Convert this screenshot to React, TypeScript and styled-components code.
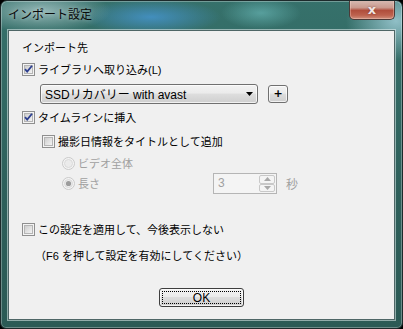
import React from 'react'
import styled, { createGlobalStyle } from 'styled-components'

const GlobalStyle = createGlobalStyle`
  html, body {
    margin: 0;
    padding: 0;
    background: #000;
  }
  body {
    font-family: "Liberation Sans", "Noto Sans CJK JP", sans-serif;
    font-size: 11px;
    color: #000;
  }
`

const Frame = styled.div`
  box-sizing: border-box;
  width: 403px;
  height: 329px;
  display: flex;
  flex-direction: column;
  border: 1px solid #1d2a2b;
  border-radius: 7px 7px 6px 6px;
  box-shadow: inset 0 0 0 1px rgba(255, 255, 255, 0.3);
  overflow: hidden;
  background:
    radial-gradient(ellipse 70px 22px at 40px 10px, rgba(170, 200, 200, 0.8), transparent),
    radial-gradient(ellipse 70px 18px at 150px 16px, rgba(70, 150, 210, 0.8), transparent),
    radial-gradient(ellipse 40px 16px at 260px 12px, rgba(110, 190, 190, 0.6), transparent),
    radial-gradient(ellipse 50px 40px at 395px 20px, rgba(160, 205, 215, 0.85), transparent),
    linear-gradient(#36716b, #2d5f5a 60%, #2b5a55);
`

const TitleBar = styled.div`
  height: 29px;
  display: flex;
  justify-content: space-between;
  align-items: flex-start;
  padding: 0 7px 0 7px;
`

const Title = styled.div`
  margin-top: 5px;
  font-family: "Noto Sans CJK JP", sans-serif;
  font-size: 12px;
  line-height: 16px;
  color: #0a0a0a;
  text-shadow: 0 0 4px rgba(255, 255, 255, 0.45);
`

const CloseButton = styled.div`
  box-sizing: border-box;
  width: 46px;
  height: 20px;
  margin-top: -1px;
  display: flex;
  align-items: center;
  justify-content: center;
  border: 1px solid #4b3a38;
  border-top: none;
  border-radius: 0 0 5px 5px;
  box-shadow: inset 0 0 0 1px rgba(255, 220, 210, 0.35);
  background: linear-gradient(#d8bdb5, #c99a8e 40%, #b04e3c 55%, #bd624e 80%, #cf8f7c);
  color: #f0e6e4;
  font-family: "DejaVu Sans", sans-serif;
  font-weight: bold;
  font-size: 13px;
  line-height: 1;
  text-shadow: 0 0 2px rgba(80, 30, 20, 0.6);
`

const Client = styled.div`
  box-sizing: border-box;
  margin: 0 7px 8px 7px;
  flex: 1;
  background: #f0f0f0;
  border: 1px solid #4e6666;
  box-shadow: 0 0 0 1px rgba(230, 240, 240, 0.55);
  padding: 6px 0 0 13px;
  display: flex;
  flex-direction: column;
`

const Row = styled.div<{ $indent?: number; $h: number; $mt?: number }>`
  display: flex;
  align-items: center;
  height: ${({ $h }) => $h}px;
  margin-top: ${({ $mt }) => $mt || 0}px;
  padding-left: ${({ $indent }) => $indent || 0}px;
  white-space: nowrap;
`

const Label = styled.span<{ $disabled?: boolean; $width?: number }>`
  margin-left: 3px;
  color: ${({ $disabled }) => ($disabled ? '#a0a0a0' : '#000')};
  ${({ $width }) => ($width ? `width: ${$width}px;` : '')}
  line-height: 14px;
`

const Heading = styled.span`
  line-height: 14px;
`

const Combo = styled.div`
  box-sizing: border-box;
  width: 218px;
  height: 20px;
  display: flex;
  align-items: center;
  justify-content: space-between;
  padding: 0 4px 0 4px;
  border: 1px solid #707070;
  border-radius: 3px;
  box-shadow: inset 0 0 0 1px rgba(255, 255, 255, 0.7);
  background: linear-gradient(#f2f2f2, #ebebeb 45%, #dddddd 50%, #cfcfcf);
  font-size: 12px;
`

const PlainButton = styled.div<{ $w: number; $h: number }>`
  box-sizing: border-box;
  width: ${({ $w }) => $w}px;
  height: ${({ $h }) => $h}px;
  display: flex;
  align-items: center;
  justify-content: center;
  border: 1px solid #707070;
  border-radius: 3px;
  box-shadow: inset 0 0 0 1px rgba(255, 255, 255, 0.7);
  background: linear-gradient(#f2f2f2, #ebebeb 45%, #dddddd 50%, #cfcfcf);
`

const PlusButton = styled(PlainButton)`
  margin-left: 10px;
  font-family: "DejaVu Sans", sans-serif;
  font-weight: bold;
  font-size: 11px;
`

const Spinner = styled.div`
  box-sizing: border-box;
  width: 64px;
  height: 21px;
  display: flex;
  border: 1px solid #b5b5b5;
  background: #f4f4f4;
  padding: 1px;
`

const SpinValue = styled.div`
  flex: 1;
  padding-left: 3px;
  color: #a0a0a0;
  font-size: 12px;
  line-height: 17px;
`

const SpinButtons = styled.div`
  width: 16px;
  display: flex;
  flex-direction: column;
`

const SpinButton = styled.div`
  box-sizing: border-box;
  flex: 1;
  display: flex;
  align-items: center;
  justify-content: center;
  border: 1px solid #c8c8c8;
  border-radius: 2px;
  background: #f4f4f4;
`

const Unit = styled.span`
  margin-left: 9px;
  color: #a0a0a0;
  font-size: 12px;
`

const Footer = styled.div`
  display: flex;
  justify-content: center;
  margin-top: 23px;
  margin-left: -13px;
`

const OkButton = styled(PlainButton)`
  border-color: #3e3e3e;
  padding: 2px;
  font-size: 12px;
`

const FocusRect = styled.div`
  box-sizing: border-box;
  width: 100%;
  height: 100%;
  display: flex;
  align-items: center;
  justify-content: center;
  border: 1px dotted #000;
  line-height: 1;
`

const CheckBox = ({ checked }: { checked?: boolean }) => (
  <svg width="13" height="13" viewBox="0 0 13 13">
    <defs>
      <linearGradient id="cbFill" x1="0" y1="0" x2="1" y2="1">
        <stop offset="0" stopColor="#cbcbcb" />
        <stop offset="1" stopColor="#f6f6f6" />
      </linearGradient>
    </defs>
    <rect x="0.5" y="0.5" width="12" height="12" fill="#f4f4f4" stroke="#8f8f8f" />
    <rect x="2.5" y="2.5" width="8" height="8" fill="url(#cbFill)" stroke="#b5b5b5" />
    {checked && (
      <path d="M3 6.2 L5.2 8.6 L10 2.8" fill="none" stroke="#2d3f8f" strokeWidth="1.8" />
    )}
  </svg>
)

const Radio = ({ checked }: { checked?: boolean }) => (
  <svg width="13" height="13" viewBox="0 0 13 13">
    <circle cx="6.5" cy="6.5" r="6" fill="#f4f4f4" stroke="#c9c9c9" />
    <circle cx="6.5" cy="6.5" r="4" fill="#ebebeb" stroke="#dadada" />
    {checked && <circle cx="6.5" cy="6.5" r="2.6" fill="#9c9c9c" />}
  </svg>
)

const Tri = ({ up, color }: { up?: boolean; color: string }) => (
  <svg width="7" height="4" viewBox="0 0 7 4">
    <path d={up ? 'M0 4 L3.5 0 L7 4 Z' : 'M0 0 L7 0 L3.5 4 Z'} fill={color} />
  </svg>
)

const App: React.FC = () => {
  return (
    <>
      <GlobalStyle />
      <Frame>
        <TitleBar>
          <Title>インポート設定</Title>
          <CloseButton>x</CloseButton>
        </TitleBar>
        <Client>
          <Row $h={21}>
            <Heading>インポート先</Heading>
          </Row>
          <Row $h={23}>
            <CheckBox checked />
            <Label>ライブラリへ取り込み(L)</Label>
          </Row>
          <Row $h={25} $indent={18}>
            <Combo>
              <span>SSDリカバリー with avast</span>
              <Tri color="#000" />
            </Combo>
            <PlusButton $w={20} $h={18}>+</PlusButton>
          </Row>
          <Row $h={23}>
            <CheckBox checked />
            <Label>タイムラインに挿入</Label>
          </Row>
          <Row $h={25} $indent={20}>
            <CheckBox />
            <Label>撮影日情報をタイトルとして追加</Label>
          </Row>
          <Row $h={19} $indent={40}>
            <Radio />
            <Label $disabled>ビデオ全体</Label>
          </Row>
          <Row $h={21} $indent={40}>
            <Radio checked />
            <Label $disabled $width={135}>長さ</Label>
            <Spinner>
              <SpinValue>3</SpinValue>
              <SpinButtons>
                <SpinButton>
                  <Tri up color="#a8a8a8" />
                </SpinButton>
                <SpinButton>
                  <Tri color="#a8a8a8" />
                </SpinButton>
              </SpinButtons>
            </Spinner>
            <Unit>秒</Unit>
          </Row>
          <Row $h={23} $mt={24}>
            <CheckBox />
            <Label>この設定を適用して、今後表示しない</Label>
          </Row>
          <Row $h={20} $mt={4} $indent={13}>
            <span>（F6 を押して設定を有効にしてください）</span>
          </Row>
          <Footer>
            <OkButton $w={85} $h={19}>
              <FocusRect>OK</FocusRect>
            </OkButton>
          </Footer>
        </Client>
      </Frame>
    </>
  )
}

export default App
